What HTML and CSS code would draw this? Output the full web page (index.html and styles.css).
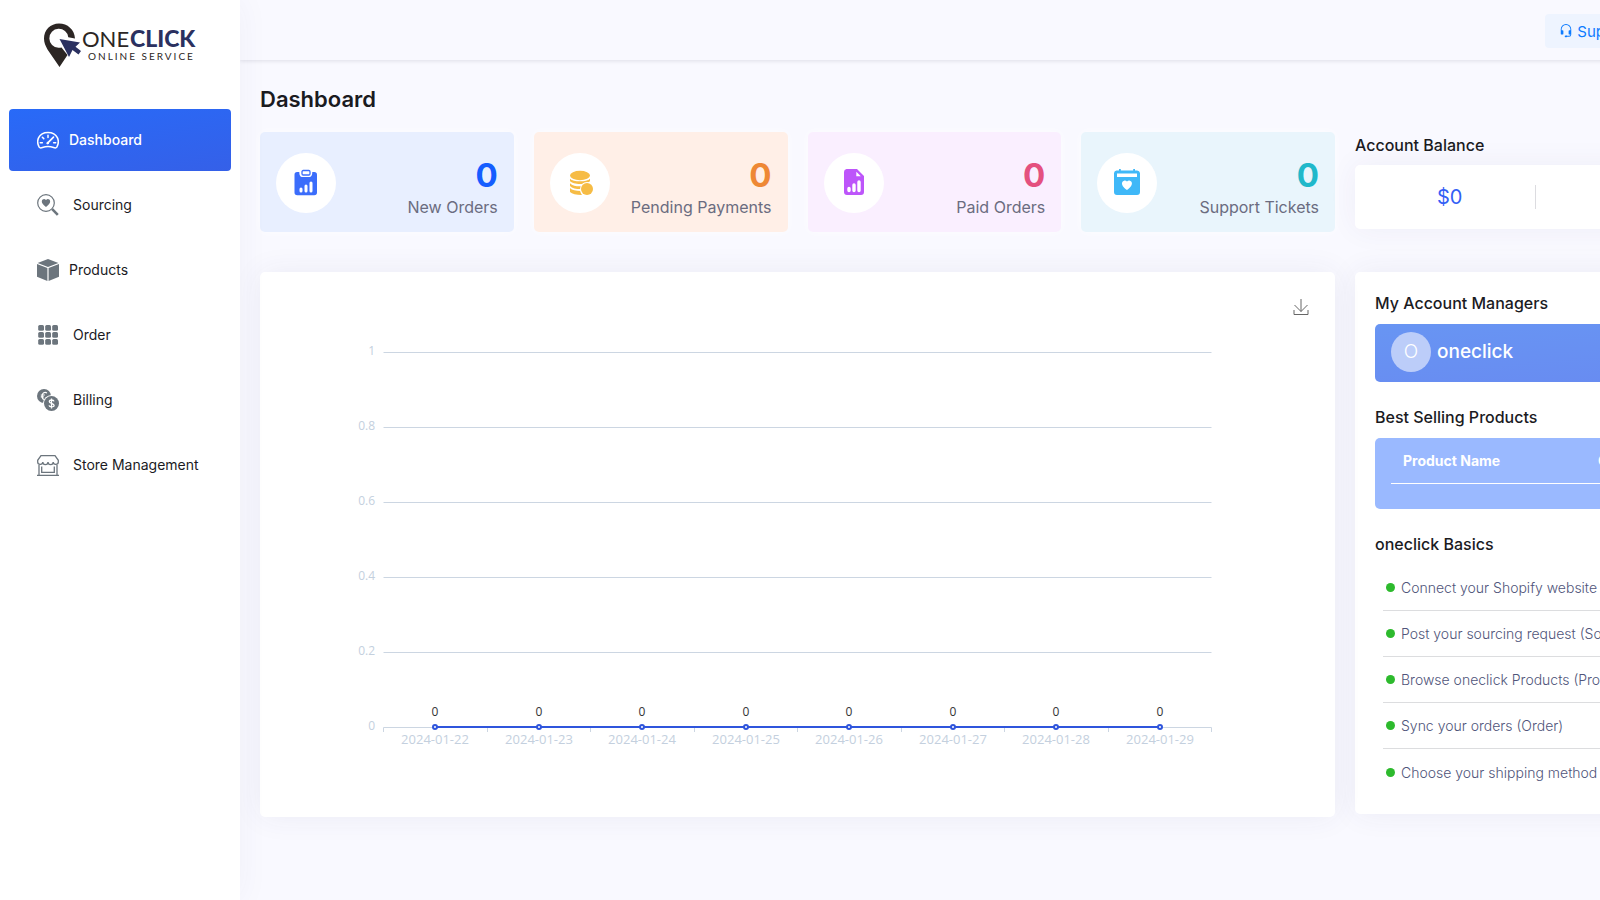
FILE: index.html
```html
<!DOCTYPE html>
<html lang="en">
<head>
<meta charset="utf-8">
<title>Dashboard</title>
<link rel="stylesheet" href="styles.css">
</head>
<body>
<div class="shell">
  <aside class="sidebar">
    <a class="logo" href="#" aria-label="OneClick Online Service">
      <svg width="160" height="46" viewBox="0 0 160 46">
        <path fill="#2c2624" d="M17 1.500C8.500 1.500 2 8 2 16.500c0 4 1.500 7.500 3.500 11L17.500 45 25.500 33l-6-7.500c-1 .3-2 .4-3 .3a9.500 9.500 0 1 1 9.800-10.500l6.700 1.200C32.500 7.500 25.500 1.500 17 1.500z"/>
        <path fill="#2b3160" d="M17.500 17l20.500 3.500-4.500 4.300 5.500 4.200-2.500 3.500-6-4.500-3.500 7z"/>
        <text class="logo-one" x="40" y="25">ONE</text>
        <text class="logo-click" x="88" y="25">CLICK</text>
        <text class="logo-sub" x="46" y="38">ONLINE SERVICE</text>
      </svg>
    </a>
    <nav class="nav">
      <a class="nav-item active" href="#">
        <svg width="22" height="22" viewBox="0 0 16 16" fill="none" stroke="#fff" stroke-width="1.100" stroke-linecap="round"><path d="M1.600 13.200C-.8 9 .8 2.500 8 2.500s8.800 6.500 6.400 10.700c-.6.900-1.500.6-2.300.3-2.600-.9-5.600-.9-8.200 0-.8.300-1.700.6-2.300-.3zM8 4.500v1.600M3.900 6l1 1M2.400 10h1.500M12.100 10h1.500" /><path d="M7.500 10.500 12 5.900" stroke-width="1.200"/><circle cx="7.900" cy="10.100" r=".9" fill="#fff" stroke="none"/></svg>
        <span>Dashboard</span>
      </a>
      <a class="nav-item wide" href="#">
        <svg width="22" height="22" viewBox="0 0 22 22"><circle cx="9" cy="9" r="8.300" fill="none" stroke="#6c757d" stroke-width="1.200"/><path d="m15.200 15.200 5.600 5.600" stroke="#6c757d" stroke-width="2.600"/><path fill="#6c757d" d="M9 13C2.500 8.500 5 5 7.200 5 8.200 5 9 6.100 9 6.100S9.800 5 10.800 5C13 5 15.500 8.500 9 13z"/></svg>
        <span>Sourcing</span>
      </a>
      <a class="nav-item" href="#">
        <svg width="22" height="22" viewBox="0 0 22 22" fill="#6c757d"><path d="M11 0 21.400 4 11 8 .6 4zM0 5l10.400 4.100V22L0 17.800zM22 5 11.600 9.100V22L22 17.800z"/></svg>
        <span>Products</span>
      </a>
      <a class="nav-item wide" href="#">
        <svg width="22" height="22" viewBox="0 0 22 22" fill="#6c757d"><rect x="1.200" y="1" width="5.800" height="5.800" rx="1.500"/><rect x="8.200" y="1" width="5.800" height="5.800" rx="1.500"/><rect x="15.200" y="1" width="5.800" height="5.800" rx="1.500"/><rect x="1.200" y="8" width="5.800" height="5.800" rx="1.500"/><rect x="8.200" y="8" width="5.800" height="5.800" rx="1.500"/><rect x="15.200" y="8" width="5.800" height="5.800" rx="1.500"/><rect x="1.200" y="15" width="5.800" height="5.800" rx="1.500"/><rect x="8.200" y="15" width="5.800" height="5.800" rx="1.500"/><rect x="15.200" y="15" width="5.800" height="5.800" rx="1.500"/></svg>
        <span>Order</span>
      </a>
      <a class="nav-item wide" href="#">
        <svg width="22" height="22" viewBox="0 0 22 22"><circle cx="7" cy="7" r="7" fill="#6c757d"/><path d="M10 4C7.500 2.700 5.500 4 5.200 6.500 5 9 5.500 10 7 10.500M3.800 6h4M3.800 7.800h3" fill="none" stroke="#fff" stroke-width="1.200"/><circle cx="14.500" cy="14.500" r="8.600" fill="#fff"/><circle cx="14.500" cy="14.500" r="7.500" fill="#6c757d"/><path d="M14.500 9.500v10M17 12.300c-.4-1.600-4.700-1.900-4.700.2 0 2.200 4.800 1.600 4.800 3.900 0 2.100-4.700 1.900-5.100-.1" fill="none" stroke="#fff" stroke-width="1.300"/></svg>
        <span>Billing</span>
      </a>
      <a class="nav-item wide" href="#">
        <svg width="22" height="22" viewBox="0 0 22 22" fill="none" stroke="#6c757d" stroke-width="1.300"><path d="M4 1.700h14l3.300 4.600v1.400a2.500 2.500 0 0 1-5.100.3 2.600 2.600 0 0 1-5.200 0 2.600 2.600 0 0 1-5.200 0A2.500 2.500 0 0 1 .7 7.700V6.300zM0 21.300h22M2 11v10M20 11v10M4.700 12.500v5.800h12.600v-5.800"/></svg>
        <span>Store Management</span>
      </a>
    </nav>
  </aside>

  <div class="main">
    <header class="topbar">
      <button class="support" type="button">
        <svg width="14" height="14" viewBox="0 0 16 16" fill="#0d7bff"><path d="M8 1a5 5 0 0 0-5 5v1h1a1 1 0 0 1 1 1v3a1 1 0 0 1-1 1H3a1 1 0 0 1-1-1V6a6 6 0 1 1 12 0v6a2.500 2.500 0 0 1-2.500 2.500H9.400a1 1 0 0 1-.9.500h-1a1 1 0 1 1 0-2h1a1 1 0 0 1 .9.500h2.100A1.500 1.500 0 0 0 13 12h-1a1 1 0 0 1-1-1V8a1 1 0 0 1 1-1h1V6a5 5 0 0 0-5-5z"/></svg>
        Support
      </button>
    </header>

    <main class="content">
      <h1>Dashboard</h1>
      <div class="grid">
        <section class="stats">
          <article class="stat blue">
            <span class="disc"><svg width="28" height="28" viewBox="0 0 28 28"><path fill="#3b6dfb" d="M5.500 3h1.800c0 4 1.500 5 3 5h7c1.500 0 3-1 3-5h1.800A2.800 2.800 0 0 1 25 5.800v17.700a2.800 2.800 0 0 1-2.800 2.800H5.300a2.800 2.800 0 0 1-2.800-2.800V5.800A2.800 2.800 0 0 1 5.500 3z"/><rect x="10" y="1.500" width="8" height="4.500" rx="1.200" fill="none" stroke="#3b6dfb" stroke-width="1.300"/><path d="M9 22v-2M14 22v-5M19 22V14" stroke="#fff" stroke-width="3" stroke-linecap="round"/></svg></span>
            <div class="figures"><strong>0</strong><span>New Orders</span></div>
          </article>
          <article class="stat orange">
            <span class="disc"><svg width="28" height="28" viewBox="0 0 28 28"><ellipse cx="14" cy="6.500" rx="10" ry="4.700" fill="#f6bc45"/><path fill="#f6bc45" d="M4 9.700c3 3.500 17 3.500 20 0V12c-3 4-17 4-20 0zM4 14.200c3 3.300 10 3.600 14 2.700-1.500.8-2.600 2-3 3.200-5 0-9-.8-11-3.200zM4 19c2 2.200 6 3 10.500 3 0 1.500.5 2.800 1.500 4C10 26 6 25 4 23z"/><circle cx="21" cy="20" r="7" fill="#fff"/><circle cx="21" cy="20" r="6" fill="#f6bc45"/></svg></span>
            <div class="figures"><strong>0</strong><span>Pending Payments</span></div>
          </article>
          <article class="stat purple">
            <span class="disc"><svg width="28" height="28" viewBox="0 0 28 28"><path fill="#bd55fa" d="M6.500 0H17l7 7v16a3 3 0 0 1-3 3H7a3 3 0 0 1-3-3V3a3 3 0 0 1 2.500-3z"/><path fill="#fff" d="M16.300 2.800v4.500h4.500z"/><path d="M9 21.500v-2M14 21.500V16M19 21.500V13" stroke="#fff" stroke-width="3.400" stroke-linecap="round"/></svg></span>
            <div class="figures"><strong>0</strong><span>Paid Orders</span></div>
          </article>
          <article class="stat cyan">
            <span class="disc"><svg width="28" height="28" viewBox="0 0 28 28"><path fill="#3fb8f8" d="M3.500 1.500H6V0h1.800v1.500h12.400V0H22v1.500h2A3 3 0 0 1 27 4v19a3 3 0 0 1-3 3H4a3 3 0 0 1-3-3V4a3 3 0 0 1 2.500-2.500z"/><path fill="#fff" d="M4 4.500h20v3.500H4zM14 21c-8-5.500-4.500-9.500-2-9.500 1.400 0 2 1.200 2 1.200s.6-1.200 2-1.200c2.500 0 6 4-2 9.500z"/></svg></span>
            <div class="figures"><strong>0</strong><span>Support Tickets</span></div>
          </article>
        </section>

        <section class="balance">
          <h2>Account Balance</h2>
          <div class="balance-card"><span>$0</span><span>$0</span></div>
        </section>

        <section class="chart-card">
          <button class="download" type="button" aria-label="Save as image">
            <svg width="16" height="18" viewBox="0 0 16 18" fill="none" stroke="#666"><path d="M8 1v12.500M1.500 7 8 13.500 14.500 7M1 12v4.500h14V12"/></svg>
          </button>
          <svg class="chart" viewBox="0 0 1075 545">
            <path class="gridline" d="M123.500 80.500h828M123.500 155.500h828M123.500 230.500h828M123.500 305.500h828M123.500 380.500h828"/>
            <path class="axis" d="M123.500 460v-4.500h828v4.500M227.500 455v5M330.500 455v5M434.500 455v5M537.500 455v5M641.500 455v5M744.500 455v5M848.500 455v5"/>
            <g class="y-labels">
              <text x="115" y="83">1</text><text x="115" y="158">0.8</text><text x="115" y="233">0.6</text><text x="115" y="308">0.4</text><text x="115" y="383">0.2</text><text x="115" y="458">0</text>
            </g>
            <path class="series" d="M175 455h725"/>
            <g class="points">
              <circle cx="175" cy="455" r="2"/><circle cx="279" cy="455" r="2"/><circle cx="382" cy="455" r="2"/><circle cx="486" cy="455" r="2"/><circle cx="589" cy="455" r="2"/><circle cx="693" cy="455" r="2"/><circle cx="796" cy="455" r="2"/><circle cx="900" cy="455" r="2"/>
            </g>
            <g class="values">
              <text x="175" y="444">0</text><text x="279" y="444">0</text><text x="382" y="444">0</text><text x="486" y="444">0</text><text x="589" y="444">0</text><text x="693" y="444">0</text><text x="796" y="444">0</text><text x="900" y="444">0</text>
            </g>
            <g class="x-labels">
              <text x="175" y="472">2024-01-22</text><text x="279" y="472">2024-01-23</text><text x="382" y="472">2024-01-24</text><text x="486" y="472">2024-01-25</text><text x="589" y="472">2024-01-26</text><text x="693" y="472">2024-01-27</text><text x="796" y="472">2024-01-28</text><text x="900" y="472">2024-01-29</text>
            </g>
          </svg>
        </section>

        <aside class="panel">
          <h2>My Account Managers</h2>
          <div class="manager"><span class="avatar">O</span><span>oneclick</span></div>
          <h2>Best Selling Products</h2>
          <div class="products">
            <table>
              <thead><tr><th>Product Name</th><th>Orders</th></tr></thead>
            </table>
          </div>
          <h2>oneclick Basics</h2>
          <ul class="basics">
            <li>Connect your Shopify website</li>
            <li>Post your sourcing request (Sourcing)</li>
            <li>Browse oneclick Products (Products)</li>
            <li>Sync your orders (Order)</li>
            <li>Choose your shipping method</li>
          </ul>
        </aside>
      </div>
    </main>
  </div>
</div>
</body>
</html>
```

FILE: styles.css
```css
* {
  box-sizing: border-box;
}

body {
  margin: 0;
  overflow: hidden;
  background: #f9f9ff;
  color: #1b1b1f;
  font-family: Inter, "Liberation Sans", sans-serif;
  font-size: 14px;
}

h1,
h2 {
  margin: 0;
}

h2 {
  font-size: 16px;
  line-height: 20px;
  font-weight: 500;
}

button {
  border: 0;
  font: inherit;
  cursor: pointer;
}

/* The dashboard grid runs past the right edge of the window */
.shell {
  display: flex;
  width: calc(100% + 135px);
  min-height: 100vh;
}

.sidebar {
  z-index: 1;
  flex: 0 0 240px;
  padding: 22px 9px;
  background: #fff;
  box-shadow: 0 0 30px rgba(60, 50, 120, 0.05);
}

.logo {
  display: block;
  margin-left: 33px;
}

.logo svg {
  display: block;
}

.logo text {
  font-family: Lato, sans-serif;
}

.logo-one {
  fill: #2c2624;
  font-size: 22px;
}

.logo .logo-click {
  fill: #2b3160;
  font-size: 23px;
  font-weight: 900;
}

.logo-sub {
  fill: #2c2624;
  font-size: 10px;
  letter-spacing: 2px;
}

.nav {
  display: flex;
  flex-direction: column;
  gap: 3px;
  margin-top: 41px;
}

.nav-item {
  display: flex;
  align-items: center;
  gap: 10px;
  height: 62px;
  padding-left: 28px;
  border-radius: 4px;
  color: #1b1b1f;
  text-decoration: none;
}

.nav-item span {
  padding-bottom: 2px;
}

.nav-item.wide {
  gap: 14px;
}

.nav-item.active {
  background: linear-gradient(170deg, #286af8, #3560e8);
  color: #fff;
  font-weight: 500;
}

.main {
  flex: 1;
  min-width: 0;
}

.topbar {
  display: flex;
  justify-content: flex-end;
  align-items: flex-start;
  height: 60px;
  padding: 14px 87px 0 0;
  box-shadow: 0 1px 4px rgba(30, 30, 60, 0.12);
}

.support {
  display: flex;
  align-items: center;
  gap: 4px;
  height: 34px;
  padding: 0 14px;
  border-radius: 4px;
  background: #eef4ff;
  color: #0d7bff;
  font-size: 15px;
}

.content {
  padding: 24px 20px;
}

h1 {
  font-size: 22px;
  line-height: 30px;
  font-weight: 600;
}

.grid {
  display: grid;
  grid-template-columns: minmax(0, 1fr) 360px;
  align-items: start;
  column-gap: 20px;
  row-gap: 40px;
  margin-top: 18px;
}

.stats {
  display: grid;
  grid-template-columns: repeat(4, 1fr);
  gap: 20px;
}

.stat {
  display: flex;
  justify-content: space-between;
  height: 100px;
  padding: 21px 16px 0;
  border-radius: 5px;
  box-shadow: 0 0 8px rgba(255, 255, 255, 0.8);
}

.disc {
  display: flex;
  align-items: center;
  justify-content: center;
  width: 60px;
  height: 60px;
  border-radius: 50%;
  background: #fff;
}

.figures {
  display: flex;
  flex-direction: column;
  align-items: flex-end;
  padding-top: 2px;
  color: #6b6c80;
  font-size: 16px;
  line-height: 24px;
}

.figures strong {
  font-size: 33px;
  line-height: 40px;
  font-weight: 700;
}

.blue {
  background: #e8efff;
}

.blue strong {
  color: #155dff;
}

.orange {
  background: #ffefe7;
}

.orange strong {
  color: #ee8835;
}

.purple {
  background: #faefff;
}

.purple strong {
  color: #e4507f;
}

.cyan {
  background: #e9f5fc;
}

.cyan strong {
  color: #20b8ca;
}

.balance {
  padding-top: 3px;
}

.balance-card {
  display: flex;
  align-items: center;
  height: 64px;
  margin-top: 10px;
  border-radius: 5px;
  background: #fff;
  box-shadow: 0 0 30px rgba(60, 50, 120, 0.06);
  color: #3360f5;
  font-size: 20px;
  line-height: 24px;
}

.balance-card span {
  flex: 1;
  padding-left: 10px;
  text-align: center;
}

.balance-card span + span {
  border-left: 1px solid #dcdce0;
}

.chart-card {
  position: relative;
  border-radius: 5px;
  background: #fff;
  box-shadow: 0 0 30px rgba(60, 50, 120, 0.07);
}

.download {
  position: absolute;
  top: 26px;
  right: 26px;
  padding: 0;
  background: none;
}

.download svg {
  display: block;
}

.chart {
  display: block;
  width: 100%;
}

.chart text {
  font-family: "Open Sans", "Noto Sans", sans-serif;
  font-size: 12px;
}

.gridline,
.axis {
  fill: none;
  stroke: #ccd6e2;
}

.y-labels {
  fill: #c4d0de;
  text-anchor: end;
}

.x-labels {
  fill: #c4d0de;
  text-anchor: middle;
}

.chart .x-labels text {
  font-size: 13px;
}

.values {
  fill: #333;
  text-anchor: middle;
}

.series {
  stroke: #2f55dc;
  stroke-width: 2;
}

.points {
  fill: #fff;
  stroke: #2f55dc;
  stroke-width: 2;
}

.panel {
  padding: 21px 20px 19px;
  border-radius: 5px;
  background: #fff;
  box-shadow: 0 0 30px rgba(60, 50, 120, 0.07);
}

.manager {
  display: flex;
  align-items: center;
  gap: 6px;
  height: 58px;
  margin: 11px 0 25px;
  padding: 0 16px 3px;
  border-radius: 5px;
  background: linear-gradient(175deg, #6895f3, #688bf1);
  color: #fff;
  font-size: 19px;
  font-weight: 500;
}

.avatar {
  display: flex;
  align-items: center;
  justify-content: center;
  width: 40px;
  height: 40px;
  border-radius: 50%;
  background: #bccdf9;
  font-weight: 300;
}

.products {
  height: 71px;
  margin: 11px 0 25px;
  padding: 0 16px;
  border-radius: 5px;
  background: #9ab9ff;
}

.products table {
  width: 100%;
  border-collapse: collapse;
  table-layout: fixed;
}

.products th {
  height: 45px;
  padding: 0 12px;
  border-bottom: 1px solid #fff;
  color: #fff;
  font-weight: 700;
  text-align: left;
}

.products th:first-child {
  width: 195px;
}

.basics {
  margin: 11px 0 0;
  padding: 0 8px;
  list-style: none;
}

.basics li {
  display: flex;
  align-items: center;
  gap: 6px;
  height: 46px;
  padding-left: 3px;
  border-bottom: 1px solid #dcdddf;
  color: #50557a;
  font-weight: 300;
  white-space: nowrap;
}

.basics li:last-child {
  border-bottom: 0;
}

.basics li::before {
  width: 9px;
  height: 9px;
  border-radius: 50%;
  background: #2dba2d;
  content: "";
}
```
